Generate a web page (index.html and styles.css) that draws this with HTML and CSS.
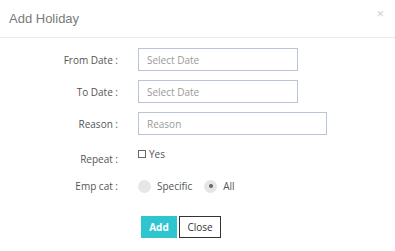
FILE: index.html
```html
<!DOCTYPE html>
<html lang="en">

<head>
    <meta charset="UTF-8">
    <meta name="viewport" content="width=device-width, initial-scale=1.0">
    <title>Add Holiday</title>

    <link rel="stylesheet" href="styles.css">
</head>

<body>
    <div class="modal">
        <div class="modal-header">
            <h4>Add Holiday</h4>
            <span class="close-x">&times;</span>
        </div>
        <form class="modal-body" id="holidayForm">
            <div class="form-row">
                <label for="fromDate">From Date :</label>
                <input type="text" id="fromDate" class="input-sm" placeholder="Select Date">
            </div>
            <div class="form-row">
                <label for="toDate">To Date :</label>
                <input type="text" id="toDate" class="input-sm" placeholder="Select Date">
            </div>
            <div class="form-row">
                <label for="reason">Reason :</label>
                <input type="text" id="reason" class="input-lg" placeholder="Reason">
            </div>
            <div class="form-row row-repeat">
                <label>Repeat :</label>
                <div class="check">
                    <span class="check-box"></span>
                    <span>Yes</span>
                </div>
            </div>
            <div class="form-row row-emp">
                <label>Emp cat :</label>
                <div class="radios">
                    <span class="radio"></span>
                    <span class="radio-text">Specific</span>
                    <span class="radio checked"></span>
                    <span class="radio-text">All</span>
                </div>
            </div>
            <div class="actions">
                <button type="submit" class="btn-add">Add</button>
                <button type="button" class="btn-close">Close</button>
            </div>
        </form>
    </div>
</body>

</html>
```

FILE: styles.css
```css
/* Global reset */

* {
    margin: 0;
    padding: 0;
    box-sizing: border-box;
}

body {
    font-family: 'Open Sans', 'Liberation Sans', sans-serif;
    background-color: #fff;
    color: #555;
    font-size: 10px;
}

.modal {
    width: 395px;
    height: 251px;
    background-color: white;
}

.modal-header {
    display: flex;
    justify-content: space-between;
    align-items: flex-start;
    height: 38px;
    padding: 11px 9px 0 9px;
    border-bottom: 1px solid #e9e9e9;
}

.modal-header h4 {
    font-family: 'Liberation Sans', Arial, sans-serif;
    font-size: 13px;
    font-weight: normal;
    color: #7a7a7a;
}

.close-x {
    font-family: 'Liberation Sans', Arial, sans-serif;
    font-size: 13px;
    color: #cfcfcf;
    line-height: 1;
    margin-top: -4px;
    margin-right: 2px;
}

.modal-body {
    padding-top: 10px;
}

.form-row {
    display: flex;
    align-items: center;
    margin-bottom: 9px;
}

.form-row label {
    width: 119px;
    text-align: right;
    padding-right: 1px;
    color: #555;
}

.form-row input {
    margin-left: 19px;
    height: 23px;
    border: 1px solid #b9c4d6;
    padding: 0 8px;
    font-family: 'Open Sans', sans-serif;
    font-size: 10px;
    color: #555;
}

.form-row input::placeholder {
    color: #9a9a9a;
}

.input-sm {
    width: 160px;
}

.input-lg {
    width: 189px;
}

.row-repeat {
    align-items: flex-start;
    height: 23px;
    margin-top: 12px;
}

.row-repeat label {
    padding-top: 5px;
}

.check {
    margin-left: 19px;
    display: flex;
    align-items: center;
    gap: 3px;
    color: #555;
}

.check-box {
    width: 8px;
    height: 8px;
    border: 1px solid #666;
    background-color: #fff;
}

.row-emp {
    margin-top: 6px;
}

.radios {
    margin-left: 19px;
    display: flex;
    align-items: center;
}

.radio {
    width: 13px;
    height: 13px;
    border-radius: 50%;
    background-color: #e6e6e6;
    display: flex;
    align-items: center;
    justify-content: center;
}

.radio.checked::after {
    content: "";
    width: 4px;
    height: 4px;
    border-radius: 50%;
    background-color: #666;
}

.radio-text {
    margin-left: 6px;
    margin-right: 12px;
}

.radio-text:last-child {
    margin-right: 0;
}

.actions {
    display: flex;
    gap: 2px;
    padding-left: 141px;
    margin-top: 23px;
}

.actions button {
    height: 22px;
    font-family: 'Open Sans', sans-serif;
    font-size: 10px;
    cursor: pointer;
}

.btn-add {
    width: 36px;
    background-color: #2ec5cf;
    color: white;
    font-weight: bold;
    border: none;
}

.btn-close {
    width: 42px;
    background-color: white;
    color: #333;
    border: 1px solid #333;
}
```
